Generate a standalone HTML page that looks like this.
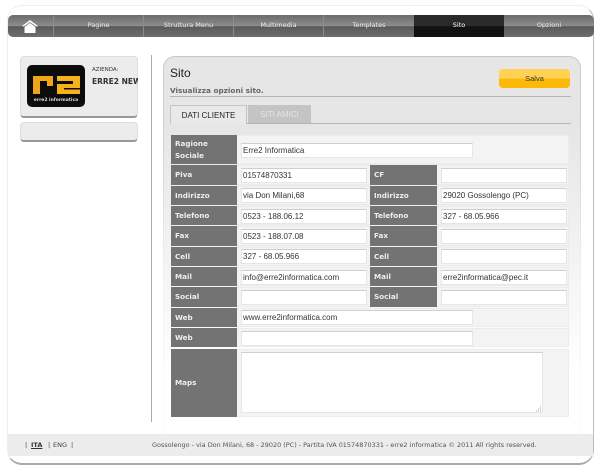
<!DOCTYPE html>
<html><head><meta charset="utf-8"><style>
html,body{margin:0;padding:0;background:#fff}
body{width:600px;height:469px;position:relative;overflow:hidden;font-family:"DejaVu Sans",sans-serif}
#w{position:absolute;left:0;top:0;width:600px;height:469px;filter:blur(.35px)}
div,span{position:absolute;box-sizing:border-box}
.nt{top:15px;height:22px;line-height:20px;text-align:center;color:#ececec;font-size:6.500px;border-left:1px solid #8a8a8a}
.row{background:#f3f3f3;border:1px solid #ececec}
.lb{background:#737373;color:#eee;font-weight:bold;font-size:7.200px;padding-left:4px;display:flex;align-items:center;line-height:12px}
.in{background:#fff;border:1px solid #e6e6e6;border-top:1px solid #cfcfcf;height:15px;font:8px/13px "Liberation Sans",sans-serif;color:#333;padding-left:1px;white-space:nowrap}
</style></head><body><div id="w">
<div style="left:7px;top:5px;width:587px;height:460px;border-radius:15px;border:1px solid #efefef;border-right:1px solid #bbb;border-bottom:2px solid #aaa;background:#fff"></div>
<div style="left:8px;top:15px;width:586px;height:22px;border-radius:5px;background:linear-gradient(#6c6c6c,#8c8c8c 50%,#5a5a5a 52%,#6e6e6e)"></div>
<svg style="position:absolute;left:21px;top:19px" width="18" height="14" viewBox="0 0 18 14"><path d="M1 7L9 1L17 7L15.500 7.500L9 3L2.500 7.500Z" fill="#fff"/><path d="M3.500 8L9 4L14.500 8V14H3.500Z" fill="#fff"/></svg>
<div class="nt" style="left:53px;width:90px">Pagine</div>
<div class="nt" style="left:143px;width:90px">Struttura Menu</div>
<div class="nt" style="left:233px;width:90px">Multimedia</div>
<div class="nt" style="left:323px;width:91px">Templates</div>
<div class="nt" style="left:414px;width:90px;background:linear-gradient(#2a2a2a,#2a2a2a 50%,#111 52%,#111);color:#fff;border:0">Sito</div>
<div class="nt" style="left:504px;width:90px;border:0">Opzioni</div>

<div style="left:20px;top:56px;width:118px;height:62px;background:#ececec;border:1px solid #ddd;border-bottom:2px solid #999;border-radius:4px"></div>
<div style="left:27px;top:65px;width:58px;height:42px;background:#0c0c0c;border-radius:5px"></div>
<svg style="position:absolute;left:27px;top:65px" width="58" height="42" viewBox="0 0 58 42"><path d="M6 11H26V21H20V16H13V29H6Z" fill="#eda51a"/><path d="M30 11H53V23H37V24.500H53V29H30V19H46V16H30Z" fill="#f5b21c"/></svg>
<div style="left:27px;top:98px;width:58px;text-align:center;color:#ddd;font-size:4.500px;font-weight:bold;line-height:6px">erre2 informatica</div>
<div style="left:92px;top:67px;font-size:5.500px;color:#333;line-height:7px">AZIENDA:</div>
<div style="left:92px;top:77px;width:46px;overflow:hidden;white-space:nowrap;font-size:7.500px;font-weight:bold;color:#333;line-height:9px">ERRE2 NEW</div>
<div style="left:20px;top:122px;width:118px;height:20px;background:#ececec;border:1px solid #ddd;border-bottom:2px solid #999;border-radius:4px"></div>
<div style="left:151px;top:55px;width:1px;height:367px;background:#aaa"></div>

<div style="left:163px;top:56px;width:418px;height:378px;border-radius:12px 12px 0 0;background:linear-gradient(#c8c8c8,#d4d4d4 25%,#f2f2f2 60%,#fbfbfb)"></div>
<div style="left:164px;top:57px;width:416px;height:377px;border-radius:11px 11px 0 0;background:linear-gradient(#e6e6e6,#e6e6e6 18%,#f2f2f2 50%,#fff 85%)"></div>
<div style="left:170px;top:65px;font:12px/17px 'Liberation Sans',sans-serif;color:#222">Sito</div>
<div style="left:170px;top:86px;font-size:7.300px;font-weight:bold;color:#666;line-height:10px">Visualizza opzioni sito.</div>
<div style="left:170px;top:96px;width:401px;height:1px;background:#b5b5b5"></div>
<div style="left:499px;top:69px;width:71px;height:19px;border-radius:4px;background:linear-gradient(#ffd254,#ffd254 50%,#fdb908 52%,#fdb908);text-align:center;font:7.500px/19px 'Liberation Sans',sans-serif;color:#333">Salva</div>
<div style="left:170px;top:123px;width:401px;height:1px;background:#b5b5b5"></div>
<div style="left:170px;top:105px;width:77px;height:19px;background:#e9e9e9;border:1px solid #c4c4c4;border-bottom:0;text-align:center;font:8px/20px 'Liberation Sans',sans-serif;color:#222">DATI CLIENTE</div>
<div style="left:248px;top:105px;width:63px;height:18px;background:#c4c4c4;text-align:center;font:8px/20px 'Liberation Sans',sans-serif;color:#e6e6e6">SITI AMICI</div>

<div class="row" style="left:171px;top:135px;width:398px;height:29px"></div>
<div class="lb" style="left:171px;top:135px;width:66px;height:29px">Ragione<br>Sociale</div>
<div class="in" style="left:241px;top:143px;width:232px">Erre2 Informatica</div>

<div class="row" style="left:171px;top:165px;width:398px;height:20px"></div>
<div class="lb" style="left:171px;top:165px;width:66px;height:20px">Piva</div><div class="in" style="left:241px;top:168px;width:126px">01574870331</div>
<div class="lb" style="left:370px;top:165px;width:67px;height:20px">CF</div><div class="in" style="left:441px;top:168px;width:126px"></div>

<div class="row" style="left:171px;top:186px;width:398px;height:19px"></div>
<div class="lb" style="left:171px;top:186px;width:66px;height:19px">Indirizzo</div><div class="in" style="left:241px;top:188px;width:126px">via Don Milani,68</div>
<div class="lb" style="left:370px;top:186px;width:67px;height:19px">Indirizzo</div><div class="in" style="left:441px;top:188px;width:126px">29020 Gossolengo (PC)</div>

<div class="row" style="left:171px;top:206px;width:398px;height:19px"></div>
<div class="lb" style="left:171px;top:206px;width:66px;height:19px">Telefono</div><div class="in" style="left:241px;top:209px;width:126px">0523 - 188.06.12</div>
<div class="lb" style="left:370px;top:206px;width:67px;height:19px">Telefono</div><div class="in" style="left:441px;top:209px;width:126px">327 - 68.05.966</div>

<div class="row" style="left:171px;top:226px;width:398px;height:20px"></div>
<div class="lb" style="left:171px;top:226px;width:66px;height:20px">Fax</div><div class="in" style="left:241px;top:229px;width:126px">0523 - 188.07.08</div>
<div class="lb" style="left:370px;top:226px;width:67px;height:20px">Fax</div><div class="in" style="left:441px;top:229px;width:126px"></div>

<div class="row" style="left:171px;top:247px;width:398px;height:19px"></div>
<div class="lb" style="left:171px;top:247px;width:66px;height:19px">Cell</div><div class="in" style="left:241px;top:249px;width:126px">327 - 68.05.966</div>
<div class="lb" style="left:370px;top:247px;width:67px;height:19px">Cell</div><div class="in" style="left:441px;top:249px;width:126px"></div>

<div class="row" style="left:171px;top:267px;width:398px;height:19px"></div>
<div class="lb" style="left:171px;top:267px;width:66px;height:19px">Mail</div><div class="in" style="left:241px;top:270px;width:126px">info@erre2informatica.com</div>
<div class="lb" style="left:370px;top:267px;width:67px;height:19px">Mail</div><div class="in" style="left:441px;top:270px;width:126px">erre2informatica@pec.it</div>

<div class="row" style="left:171px;top:287px;width:398px;height:20px"></div>
<div class="lb" style="left:171px;top:287px;width:66px;height:20px">Social</div><div class="in" style="left:241px;top:290px;width:126px"></div>
<div class="lb" style="left:370px;top:287px;width:67px;height:20px">Social</div><div class="in" style="left:441px;top:290px;width:126px"></div>

<div class="row" style="left:171px;top:308px;width:398px;height:19px"></div>
<div class="lb" style="left:171px;top:308px;width:66px;height:19px">Web</div><div class="in" style="left:241px;top:310px;width:232px">www.erre2informatica.com</div>

<div class="row" style="left:171px;top:328px;width:398px;height:19px"></div>
<div class="lb" style="left:171px;top:328px;width:66px;height:19px">Web</div><div class="in" style="left:241px;top:331px;width:232px"></div>

<div class="row" style="left:171px;top:349px;width:398px;height:68px"></div>
<div class="lb" style="left:171px;top:349px;width:66px;height:68px">Maps</div>
<div class="in" style="left:241px;top:352px;width:302px;height:61px"></div>
<svg style="position:absolute;left:535px;top:405px" width="7" height="7"><path d="M1 6h1M3 6h1M5 6h1M3 4h1M5 4h1M5 2h1" stroke="#aaa" stroke-width="1"/></svg>

<div style="left:8px;top:434px;width:585px;height:22px;background:#ececec"></div>
<div style="left:25px;top:440px;font-size:6.500px;line-height:10px;color:#444">|</div>
<div style="left:31px;top:440px;font-size:6.500px;line-height:10px;color:#333;font-weight:bold;text-decoration:underline">ITA</div>
<div style="left:48px;top:440px;font-size:6.500px;line-height:10px;color:#444">|</div>
<div style="left:53px;top:440px;font-size:6.500px;line-height:10px;color:#444">ENG</div>
<div style="left:71px;top:440px;font-size:6.500px;line-height:10px;color:#444">|</div>
<div style="left:152px;top:440px;width:390px;font-size:6.480px;line-height:10px;color:#555;white-space:nowrap">Gossolengo - via Don Milani, 68 - 29020 (PC) - Partita IVA 01574870331 - erre2 informatica © 2011 All rights reserved.</div>
</div></body></html>
